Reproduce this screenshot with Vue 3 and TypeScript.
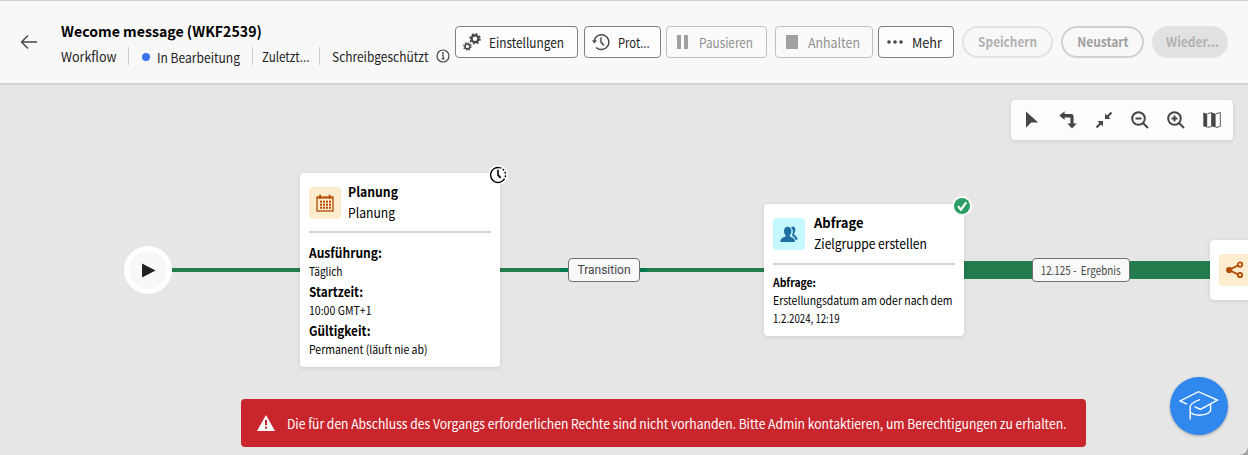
<script setup lang="ts">
interface Detail { label: string; value: string; kind: string }

const details: Detail[] = [
  { label: 'Ausführung:', value: 'Täglich', kind: 'run' },
  { label: 'Startzeit:', value: '10:00 GMT+1', kind: 'time' },
  { label: 'Gültigkeit:', value: 'Permanent (läuft nie ab)', kind: 'valid' },
]
const calendarRows = [10.5, 13.5, 16.5]
const calendarColumns = [5, 8, 11, 14]
</script>

<template>
  <main class="app">
    <header class="header">
      <svg class="back" viewBox="0 0 18 16"><path d="M17 8H1.5M8 1.5L1.5 8L8 14.5" /></svg>
      <div class="heading">
        <h1><span class="t title">Wecome message (WKF2539)</span></h1>
        <div class="meta">
          <span class="t workflow">Workflow</span>
          <span class="status"><i class="dot"></i><span class="t editing">In Bearbeitung</span></span>
          <span class="latest"><span class="t last">Zuletzt...</span></span>
          <span class="readonly"><span class="t locked">Schreibgeschützt</span>
            <svg class="info" viewBox="0 0 14 14"><circle cx="7" cy="7" r="6" /><path d="M5.8 6H7.2V9.8M5.6 9.9H8.5" /><circle class="pt" cx="7" cy="4" r=".9" /></svg>
          </span>
        </div>
      </div>
      <div class="actions">
        <button class="btn settings">
          <svg width="18" height="18" viewBox="0 0 18 18">
            <circle cx="12" cy="5.8" r="3.4" class="gear" /><circle cx="12" cy="5.8" r="4.9" class="teeth big" />
            <circle cx="4.4" cy="13.4" r="2.4" class="gear small" /><circle cx="4.4" cy="13.4" r="3.6" class="teeth little" />
          </svg>
          <span class="t">Einstellungen</span>
        </button>
        <button class="btn logs">
          <svg width="18" height="18" viewBox="0 0 18 18">
            <path d="M2.3 7.2A7.4 7.4 0 1 1 4.2 14.4" class="line" /><path d="M0 7.2H5L2.3 10.4Z" /><path d="M8.3 4.2H9.7V8.7L12.6 12L11.2 12.8L8.3 9.5Z" />
          </svg>
          <span class="t">Prot...</span>
        </button>
        <button class="btn pause" disabled>
          <svg width="12" height="14" viewBox="0 0 12 14"><path d="M0 0H4V14H0ZM7 0H11V14H7Z" /></svg>
          <span class="t">Pausieren</span>
        </button>
        <button class="btn stop" disabled>
          <svg width="12" height="14" viewBox="0 0 12 14"><path d="M0 0H12V14H0Z" /></svg>
          <span class="t">Anhalten</span>
        </button>
        <button class="btn more">
          <svg width="16" height="4" viewBox="0 0 16 4"><circle cx="2" cy="2" r="1.8" /><circle cx="8" cy="2" r="1.8" /><circle cx="14" cy="2" r="1.8" /></svg>
          <span class="t">Mehr</span>
        </button>
        <button class="pill save" disabled><span class="t">Speichern</span></button>
        <button class="pill restart"><span class="t">Neustart</span></button>
        <button class="pill resume" disabled><span class="t">Wieder...</span></button>
      </div>
    </header>

    <section class="canvas">
      <div class="wire first"></div>
      <div class="wire second"></div>
      <div class="wire joint"></div>
      <div class="wire result"></div>

      <div class="start"><svg width="14" height="15" viewBox="0 0 14 15"><path d="M0 .5L13.6 7.5L0 14.5Z" /></svg></div>

      <article class="card schedule">
        <div class="card-head">
          <div class="tile orange">
            <svg width="18" height="18" viewBox="0 0 18 18">
              <rect x="1" y="3" width="16" height="14" class="box" />
              <path d="M1 3H17V5H1Z" opacity=".6" /><path d="M3.2 .7H5V4.5H3.2ZM12.8 .7H14.6V4.5H12.8Z" />
              <template v-for="y in calendarRows" :key="y">
                <rect v-for="x in calendarColumns" :key="x" :x="x - 1" :y="y - 3.8" width="2" height="2" />
              </template>
            </svg>
          </div>
          <div class="names"><b class="t plan-title">Planung</b><span class="t plan-name">Planung</span></div>
        </div>
        <dl>
          <div v-for="d in details" :key="d.kind" :class="d.kind">
            <dt><span class="t">{{ d.label }}</span></dt>
            <dd><span class="t">{{ d.value }}</span></dd>
          </div>
        </dl>
        <span class="badge clock">
          <svg width="18" height="18" viewBox="0 0 18 18"><path d="M10.5 1.6A7.5 7.5 0 1 0 15.6 12.6" class="ring" /><path d="M10.5 1.6A7.5 7.5 0 0 1 15.6 12.6" class="ring dashed" /><path d="M8.2 3.8H9.8V8.6L12.3 11.2L11 12.4L8.2 9.4Z" /></svg>
        </span>
      </article>

      <div class="label transition">Transition</div>

      <article class="card query">
        <div class="card-head">
          <div class="tile cyan">
            <svg width="18" height="18" viewBox="0 0 18 18">
              <path d="M11 2.2C13 .6 15.6 1.8 15.3 5.2C15.1 7 14.4 8.2 14 9C14.2 10.6 17.6 11 17.7 14.6L15.6 15C14.8 12.6 13.6 11.6 12.4 11L12 9.8C13.4 7.6 13.2 4 11 2.2Z" />
              <path d="M.4 17C.4 13.6 2.6 12.8 5.5 11.6V10.2C4.4 9.2 4 7.6 4 6C4 3.4 5.4 1.8 7.7 1.8S11.4 3.4 11.4 6C11.4 7.6 11 9.2 9.9 10.2V11.6C12.8 12.8 15 13.6 15 17Z" />
            </svg>
          </div>
          <div class="names"><b class="t query-title">Abfrage</b><span class="t query-name">Zielgruppe erstellen</span></div>
        </div>
        <p class="q-title"><span class="t">Abfrage:</span></p>
        <p class="q-text"><span class="t">Erstellungsdatum am oder nach dem</span></p>
        <p class="q-date"><span class="t">1.2.2024, 12:19</span></p>
        <span class="badge done"><svg width="16" height="16" viewBox="0 0 16 16"><circle cx="8" cy="8" r="8" /><path d="M4 8.3L7 11.7L12.2 4.4" /></svg></span>
      </article>

      <div class="label count"><span class="t">12.125 - &nbsp;Ergebnis</span></div>

      <article class="card share">
        <div class="tile orange">
          <svg width="18" height="18" viewBox="0 0 18 18"><path d="M3 9L14 3.4M3 9L14 14.4" class="link" /><circle cx="3.2" cy="9" r="3.1" /><circle cx="14" cy="3.6" r="2.2" class="end" /><circle cx="14" cy="14" r="2.2" class="end" /></svg>
        </div>
      </article>

      <nav class="tools">
        <svg viewBox="0 0 18 18"><path d="M3 .6L15.2 11.4H8.2L3 16.8Z" /></svg>
        <svg viewBox="0 0 18 18"><path d="M.3 4.6L5.6 .2V3H12.4Q14.6 3 14.6 5.2V12.6H17.8L13 17.6L8.4 12.6H11.4V6.4H5.6V9Z" /></svg>
        <svg viewBox="0 0 18 18"><path d="M10 2.4V8H15.6L13.6 6L17.2 2.2L15.8 .8L12 4.4ZM2.4 10H8V15.6L6 13.6L2.2 17.2L.8 15.8L4.4 12Z" /></svg>
        <svg viewBox="0 0 18 18"><g class="glass"><circle cx="7.5" cy="7.5" r="6.3" /><path d="M12 12L17 17M4.5 7.5H10.5" /></g></svg>
        <svg viewBox="0 0 18 18"><g class="glass"><circle cx="7.5" cy="7.5" r="6.3" /><path d="M12 12L17 17M4.5 7.5H10.5M7.5 4.5V10.5" /></g></svg>
        <svg viewBox="0 0 18 18"><path d="M.3 1.5L4.2 2.8V16.5L.3 15.2ZM8.8 1.5L12.6 2.8V16.5L8.8 15.2Z" /><path class="fold" d="M4.5 2.8L8.6 1.5V15.4L4.5 16.5M12.9 2.8L17.3 1.5V15.4L12.9 16.5" /></svg>
      </nav>

      <button class="learn"><svg width="40" height="32" viewBox="0 0 40 32"><path d="M8 14.2L1.2 11L19.5 1.7L38.4 10L21.4 19.4L15.5 16.7M21 9.6Q14 11.5 11.2 16V29.6M11.2 22.6Q18 27 27 24.2Q32 22.4 31.6 19.4V14" /></svg></button>
    </section>

    <div class="toast">
      <svg width="18" height="16" viewBox="0 0 18 16"><path d="M9 0L18 16H0Z" /><path class="mark" d="M8 5H10V10.2H8ZM8 11.8H10V13.8H8Z" /></svg>
      <span class="t">Die für den Abschluss des Vorgangs erforderlichen Rechte sind nicht vorhanden. Bitte Admin kontaktieren, um Berechtigungen zu erhalten.</span>
    </div>
  </main>
</template>

<style>
body { background: #a6a6a6; }
</style>

<style scoped>
.app { position: relative; box-sizing: border-box; width: 1248px; height: 455px; overflow: hidden; background: #e6e6e6; border-radius: 0 0 9px 0; color: #000; font: 13.5px/20px "Noto Sans CJK JP", "Noto Sans", sans-serif; }
svg { display: block; flex: none; }
button { margin: 0; padding: 0; font: inherit; box-sizing: border-box; }
/* --k condenses each run of text horizontally */
.t { display: inline-block; flex: none; white-space: nowrap; transform: scaleX(var(--k, 1)); transform-origin: 0 50%; }
.header { box-sizing: border-box; height: 85px; background: #f8f8f8; border-top: 1px solid #d0d0d0; border-bottom: 2px solid #d4d4d4; display: flex; align-items: flex-start; }
.back { width: 18px; height: 16px; margin: 33px 0 0 20px; fill: none; stroke: #464646; stroke-width: 1.4; }
.heading { width: 394px; margin-left: 23px; padding-top: 19px; flex: none; }
h1 { margin: 0; font-size: 14.5px; line-height: 22px; font-weight: 700; }
.title { --k: .975; }
.meta { display: flex; align-items: center; height: 18px; margin-top: 5px; color: #222; }
.status, .latest, .readonly { flex: none; display: flex; align-items: center; height: 18px; border-left: 1px solid #d0d0d0; box-sizing: border-box; }
.workflow { width: 67px; --k: .927; }
.status { width: 124px; padding-left: 13px; }
.editing { --k: .894; padding-top: 2px; }
.dot { width: 8px; height: 8px; margin: 2px 7px 0 0; border-radius: 50%; background: #3b73ee; }
.latest { width: 67px; padding-left: 9px; }
.last { --k: .86; }
.readonly { padding-left: 12px; }
.locked { width: 104px; --k: .886; }
.info { width: 14px; height: 14px; fill: none; stroke: #444; stroke-width: 1.2; }
.info .pt { fill: #444; stroke: none; }
.actions { display: flex; padding-top: 25px; }
.btn { flex: none; height: 32px; display: flex; align-items: center; border: 1px solid #808080; border-radius: 4px; background: #fdfdfd; color: #222; fill: #464646; }
.btn:disabled { border-color: #c0c0c0; color: #909090; fill: #a0a0a0; background: #fafafa; }
.settings { width: 123px; padding-left: 7px; --k: .877; }
.settings svg { margin-right: 8px; }
.gear { fill: none; stroke: #464646; stroke-width: 2.2; }
.gear.small { stroke-width: 1.5; }
.teeth { fill: none; stroke: #464646; stroke-width: 1.8; }
.big { stroke-dasharray: 1.9 1.948; }
.little { stroke-width: 1.4; stroke-dasharray: 1.4 1.427; }
.logs { width: 77px; margin-left: 6px; padding-left: 7px; --k: .83; }
.logs svg { margin-right: 8px; }
.line { fill: none; stroke: #464646; stroke-width: 1.4; }
.pause { width: 101px; margin-left: 5px; padding-left: 10px; --k: .871; }
.pause svg { margin-right: 10px; }
.stop { width: 98px; margin-left: 8px; padding-left: 10px; --k: .917; }
.stop svg { margin-right: 10px; }
.more { width: 76px; margin-left: 5px; padding-left: 8px; --k: .94; }
.more svg { margin-right: 9px; }
.pill { flex: none; height: 32px; margin-left: 8px; border: 2px solid #e2e2e2; border-radius: 16px; background: transparent; color: #b1b1b1; font-weight: 700; display: flex; justify-content: center; padding-top: 3px; }
.pill .t, .count .t { transform-origin: 50% 50%; }
.save { width: 91px; --k: .878; }
.restart { width: 83px; border-color: #d0d0d0; color: #a0a0a0; --k: .89; }
.resume { width: 76px; padding-left: 5px; background: #e2e2e2; --k: .894; }
.canvas > * { position: absolute; }
.wire { height: 4px; top: 268px; background: #247b4e; }
.first { left: 170px; width: 132px; }
.second { left: 499px; width: 266px; }
.joint { left: 560px; width: 87px; background: #007a4d; }
.result { left: 963px; width: 248px; top: 261px; height: 18px; }
.start { left: 124px; top: 246px; width: 48px; height: 48px; box-sizing: border-box; border: 5px solid #fff; border-radius: 50%; background: #f8f8f8; display: flex; align-items: center; justify-content: center; fill: #222; }
.start svg { margin-left: 2px; }
.card { box-sizing: border-box; background: #fff; border-radius: 4px; box-shadow: 0 1px 4px rgba(0,0,0,.12); }
.schedule { left: 300px; top: 173px; width: 200px; height: 194px; padding: 8px 9px; }
.query { left: 764px; top: 204px; width: 200px; height: 132px; padding: 8px 9px; }
.share { left: 1210px; top: 240px; width: 60px; height: 60px; padding: 14px 9px; }
.card-head { display: flex; align-items: flex-start; height: 50px; border-bottom: 2px solid #d4d4d4; }
.query .card-head { height: 51px; }
.card-head .tile { margin-top: 6px; }
.tile { width: 32px; height: 32px; border-radius: 4px; display: flex; align-items: center; justify-content: center; flex: none; }
.orange { background: #fdeccd; fill: #b44b02; }
.cyan { background: #c6f8ff; fill: #2070a5; }
.box { fill: none; stroke: #b44b02; stroke-width: 1.3; }
.link { stroke: #b44b02; stroke-width: 1.8; fill: none; }
.end { stroke: #b44b02; stroke-width: 1.8; fill: #fdeccd; }
.names { display: flex; flex-direction: column; align-items: flex-start; margin-left: 7px; line-height: 21px; }
.query .names { margin-left: 9px; }
.plan-title { --k: .905; }
.plan-name { --k: .9; }
.query-title { --k: .963; }
.query-name { --k: .897; }
dl { margin: 9px 0 0; }
dt { font-weight: 700; height: 20px; }
dd { margin: 0; font-size: 11.5px; line-height: 19px; height: 19px; }
.run dt { --k: .892; }
.run dd { --k: .876; }
.time dt { --k: .874; }
.time dd { --k: .916; }
.valid dt { --k: .875; }
.valid dd { --k: .911; }
p { margin: 0; font-size: 11.5px; line-height: 18px; height: 18px; }
.q-title { font-weight: 700; margin-top: 8px; --k: .905; }
.q-text { --k: .909; }
.q-date { --k: .84; }
.badge { position: absolute; border-radius: 50%; background: #fff; display: flex; align-items: center; justify-content: center; width: 20px; height: 20px; }
.clock { left: 188px; top: -8px; }
.done { left: 188px; top: -8px; fill: #2d9d66; }
.done path { fill: none; stroke: #fff; stroke-width: 2.2; }
.ring { fill: none; stroke: #000; stroke-width: 1.4; }
.dashed { stroke-dasharray: 2 1.5; }
.label { box-sizing: border-box; height: 24px; border: 1px solid #707070; border-radius: 4px; background: #f9f9f9; color: #464646; display: flex; align-items: center; justify-content: center; }
.transition { left: 568px; top: 258px; width: 72px; font: 12px/20px Roboto, sans-serif; }
.count { left: 1032px; top: 258px; width: 98px; font-size: 11.5px; --k: .857; }
.tools { left: 1011px; top: 100px; width: 222px; height: 40px; box-sizing: border-box; padding: 0 12px; border-radius: 4px; background: #fdfdfd; box-shadow: 0 1px 4px rgba(0,0,0,.1); display: flex; align-items: center; gap: 18px; fill: #464646; }
.tools svg { width: 18px; height: 18px; }
.glass { fill: none; stroke: #464646; stroke-width: 2; }
.fold { fill: none; stroke: #464646; stroke-width: .9; }
.learn { left: 1170px; top: 377px; width: 58px; height: 58px; border: 0; border-radius: 50%; background: #3088ee; box-shadow: 0 1px 3px rgba(0,0,0,.3); display: flex; align-items: center; justify-content: center; }
.learn path { fill: none; stroke: #fff; stroke-width: 1.4; }
.toast { position: absolute; left: 241px; top: 399px; width: 845px; height: 48px; box-sizing: border-box; padding-left: 16px; border-radius: 4px; background: #c9252d; color: #fff; fill: #fff; display: flex; align-items: center; gap: 12px; --k: .899; }
.mark { fill: #c9252d; }
</style>
